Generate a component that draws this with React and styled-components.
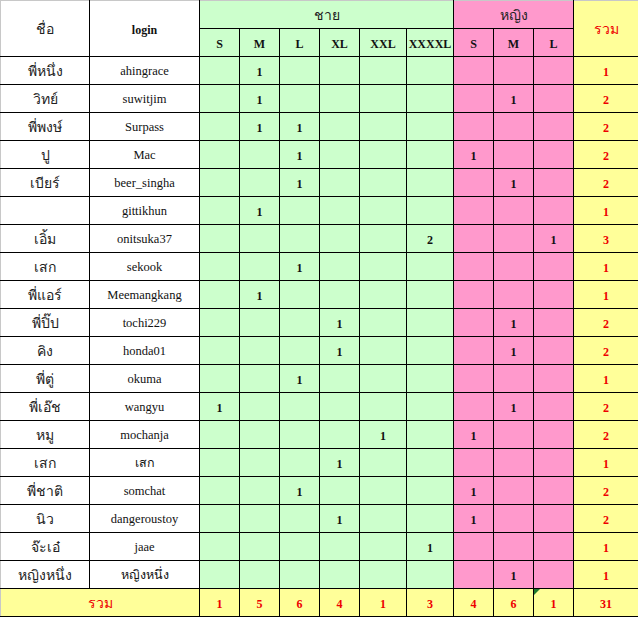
import React from 'react';
import styled, { createGlobalStyle, css } from 'styled-components';

const GlobalStyle = createGlobalStyle`
  html, body {
    margin: 0;
    padding: 0;
    background: #ffffff;
  }
  body {
    font-family: "Liberation Serif", "Times New Roman", serif;
  }
`;

const GREEN = '#ccffcc';
const PINK = '#ff99cc';
const YELLOW = '#ffff99';

const SIZES_M = ['S', 'M', 'L', 'XL', 'XXL', 'XXXXL'];
const SIZES_F = ['S', 'M', 'L'];
const COL_WIDTHS = [89, 110, 40, 40, 40, 40, 47, 47, 40, 40, 40, 65];

// [name, login, male counts (6), female counts (3)]
const rows = [
  ['พี่หนึ่ง', 'ahingrace', [0, 1, 0, 0, 0, 0], [0, 0, 0]],
  ['วิทย์', 'suwitjim', [0, 1, 0, 0, 0, 0], [0, 1, 0]],
  ['พี่พงษ์', 'Surpass', [0, 1, 1, 0, 0, 0], [0, 0, 0]],
  ['ปู', 'Mac', [0, 0, 1, 0, 0, 0], [1, 0, 0]],
  ['เบียร์', 'beer_singha', [0, 0, 1, 0, 0, 0], [0, 1, 0]],
  ['', 'gittikhun', [0, 1, 0, 0, 0, 0], [0, 0, 0]],
  ['เอิ้ม', 'onitsuka37', [0, 0, 0, 0, 0, 2], [0, 0, 1]],
  ['เสก', 'sekook', [0, 0, 1, 0, 0, 0], [0, 0, 0]],
  ['พี่แอร์', 'Meemangkang', [0, 1, 0, 0, 0, 0], [0, 0, 0]],
  ['พี่ปิ๊ป', 'tochi229', [0, 0, 0, 1, 0, 0], [0, 1, 0]],
  ['คิง', 'honda01', [0, 0, 0, 1, 0, 0], [0, 1, 0]],
  ['พี่ตู่', 'okuma', [0, 0, 1, 0, 0, 0], [0, 0, 0]],
  ['พี่เอ๊ช', 'wangyu', [1, 0, 0, 0, 0, 0], [0, 1, 0]],
  ['หมู', 'mochanja', [0, 0, 0, 0, 1, 0], [1, 0, 0]],
  ['เสก', 'เสก', [0, 0, 0, 1, 0, 0], [0, 0, 0]],
  ['พี่ชาติ', 'somchat', [0, 0, 1, 0, 0, 0], [1, 0, 0]],
  ['นิว', 'dangeroustoy', [0, 0, 0, 1, 0, 0], [1, 0, 0]],
  ['จ๊ะเอ๋', 'jaae', [0, 0, 0, 0, 0, 1], [0, 0, 0]],
  ['หญิงหนึ่ง', 'หญิงหนึ่ง', [0, 0, 0, 0, 0, 0], [0, 1, 0]],
];

const sum = (arr) => arr.reduce((a, b) => a + b, 0);
const maleTotals = SIZES_M.map((_, i) => sum(rows.map((r) => r[2][i])));
const femaleTotals = SIZES_F.map((_, i) => sum(rows.map((r) => r[3][i])));
const grandTotal = sum(maleTotals) + sum(femaleTotals);

const Sheet = styled.table`
  border-collapse: collapse;
  table-layout: fixed;
  width: 638px;
  color: #111;
`;

const Col = styled.col`
  width: ${(p) => p.$w}px;
`;

const Row = styled.tr`
  height: 28px;
`;

const fills = { green: GREEN, pink: PINK, yellow: YELLOW, white: '#ffffff' };

const Cell = styled.td`
  border: 1px solid #000;
  padding: 2px 0 0;
  text-align: center;
  vertical-align: middle;
  white-space: nowrap;
  overflow: hidden;
  background: ${(p) => fills[p.$fill || 'white']};
  font-size: 12.5px;
  line-height: 1;
  ${(p) => p.$top && css`border-top-color: #c8c8c8;`}
  ${(p) => p.$first && css`border-left-color: #c8c8c8;`}
  ${(p) => p.$last && css`border-right-color: #c8c8c8;`}
`;

const ThaiCell = styled(Cell)`
  font-size: 14px;
  color: #222;
`;

const HeadCell = styled(Cell)`
  font-weight: bold;
  font-size: 12px;
`;

const ThaiHead = styled(Cell)`
  font-size: 14px;
  color: #222;
  ${(p) => p.$red && css`color: #ee0000;`}
`;

const NumCell = styled(Cell)`
  font-weight: bold;
  font-size: 12px;
  color: ${(p) => (p.$red ? '#ee0000' : '#111')};
  position: relative;
`;

const Flag = styled.span`
  position: absolute;
  left: 0;
  top: 0;
  width: 0;
  height: 0;
  border-top: 6px solid #1f7a2e;
  border-right: 6px solid transparent;
`;

const show = (n) => (n ? n : '');

export default function App() {
  return (
    <>
      <GlobalStyle />
      <Sheet>
        <colgroup>
          {COL_WIDTHS.map((w, i) => (
            <Col key={i} $w={w} />
          ))}
        </colgroup>
        <thead>
          <Row>
            <ThaiHead rowSpan={2} $top $first>ชื่อ</ThaiHead>
            <HeadCell rowSpan={2} $top>login</HeadCell>
            <ThaiHead colSpan={6} $fill="green" $top>ชาย</ThaiHead>
            <ThaiHead colSpan={3} $fill="pink" $top>หญิง</ThaiHead>
            <ThaiHead rowSpan={2} $fill="yellow" $top $last $red>รวม</ThaiHead>
          </Row>
          <Row>
            {SIZES_M.map((s) => (
              <HeadCell key={'m' + s} $fill="green">{s}</HeadCell>
            ))}
            {SIZES_F.map((s) => (
              <HeadCell key={'f' + s} $fill="pink">{s}</HeadCell>
            ))}
          </Row>
        </thead>
        <tbody>
          {rows.map(([name, login, male, female], i) => (
            <Row key={i}>
              <ThaiCell $first>{name}</ThaiCell>
              <Cell>{login}</Cell>
              {male.map((n, j) => (
                <NumCell key={'m' + j} $fill="green">{show(n)}</NumCell>
              ))}
              {female.map((n, j) => (
                <NumCell key={'f' + j} $fill="pink">{show(n)}</NumCell>
              ))}
              <NumCell $fill="yellow" $red $last>{sum(male) + sum(female)}</NumCell>
            </Row>
          ))}
          <Row>
            <ThaiHead colSpan={2} $fill="yellow" $first $red>รวม</ThaiHead>
            {maleTotals.map((n, j) => (
              <NumCell key={'tm' + j} $fill="yellow" $red>{n}</NumCell>
            ))}
            {femaleTotals.map((n, j) => (
              <NumCell key={'tf' + j} $fill="yellow" $red>
                {j === 2 && <Flag />}
                {n}
              </NumCell>
            ))}
            <NumCell $fill="yellow" $red $last>{grandTotal}</NumCell>
          </Row>
        </tbody>
      </Sheet>
    </>
  );
}
